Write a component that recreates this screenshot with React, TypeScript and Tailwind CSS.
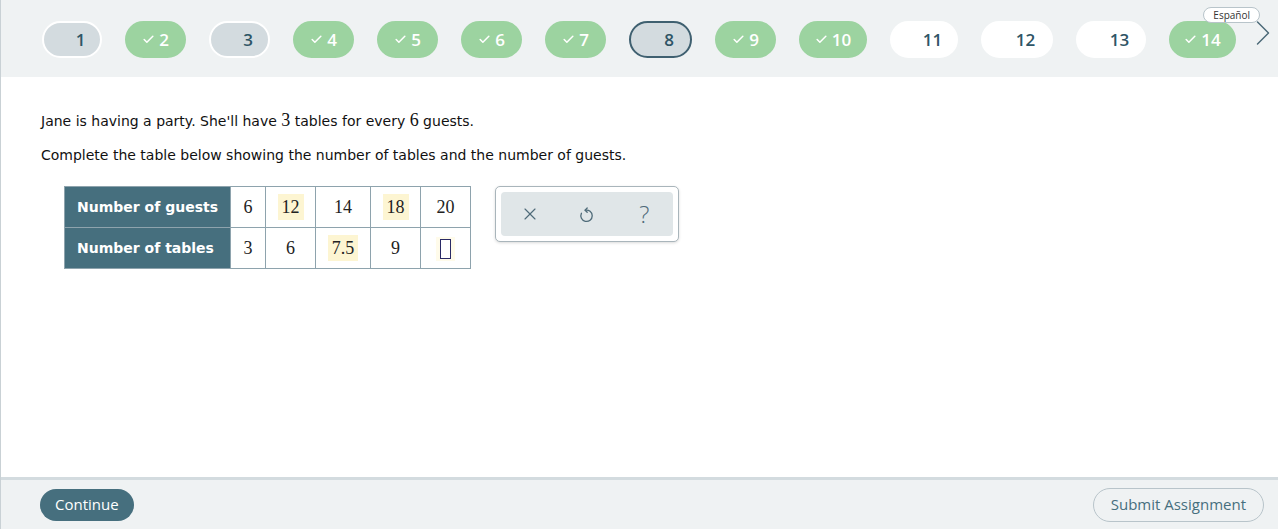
import { Check, ChevronRight, X } from 'lucide-react';

type PillState = 'todo' | 'done' | 'current' | 'open';

const pills: { n: number; state: PillState; w: string }[] = [
  { n: 1, state: 'todo', w: 'w-[60px]' },
  { n: 2, state: 'done', w: 'w-[61px]' },
  { n: 3, state: 'todo', w: 'w-[61px]' },
  { n: 4, state: 'done', w: 'w-[61px]' },
  { n: 5, state: 'done', w: 'w-[61px]' },
  { n: 6, state: 'done', w: 'w-[61px]' },
  { n: 7, state: 'done', w: 'w-[61px]' },
  { n: 8, state: 'current', w: 'w-[63px]' },
  { n: 9, state: 'done', w: 'w-[61px]' },
  { n: 10, state: 'done', w: 'w-[68px]' },
  { n: 11, state: 'open', w: 'w-[68px]' },
  { n: 12, state: 'open', w: 'w-[72px]' },
  { n: 13, state: 'open', w: 'w-[70px]' },
  { n: 14, state: 'done', w: 'w-[67px]' },
];

const pillStyles: Record<PillState, string> = {
  todo: 'bg-[#d3dbdf] text-[#2f5566] border-2 border-white',
  done: 'bg-[#9cd3a0] text-white border-2 border-[#9cd3a0]',
  current: 'bg-[#d3dbdf] text-[#2f5566] border-2 border-[#3f6070]',
  open: 'bg-white text-[#2f5566] border-2 border-white',
};

function Pill({ n, state, w }: { n: number; state: PillState; w: string }) {
  return (
    <div
      className={`h-[37px] rounded-full flex items-center justify-center shrink-0 ${pillStyles[state]} ${w}`}
    >
      <span className="w-[17px] flex items-center justify-start">
        {state === 'done' && <Check size={13} strokeWidth={2.8} />}
      </span>
      <span className="text-[17px] font-semibold leading-none">{n}</span>
    </div>
  );
}

function UndoIcon() {
  return (
    <svg width="21" height="21" viewBox="0 0 24 24" fill="none" stroke="currentColor" strokeWidth="1.5" strokeLinecap="round" strokeLinejoin="round">
      <path d="M10.6 7.1 A6.5 6.5 0 1 1 6.2 10.6" />
      <path d="M12.8 4.6 L10.4 7.1 L12.8 9.5" />
    </svg>
  );
}

const guests = [
  { v: '6', hl: false, w: 'w-[35px]' },
  { v: '12', hl: true, w: 'w-[50px]' },
  { v: '14', hl: false, w: 'w-[55px]' },
  { v: '18', hl: true, w: 'w-[50px]' },
  { v: '20', hl: false, w: 'w-[50px]' },
];
const tables = [
  { v: '3', hl: false },
  { v: '6', hl: false },
  { v: '7.5', hl: true },
  { v: '9', hl: false },
  { v: '', hl: false },
];

export default function App() {
  return (
    <div className="h-[529px] w-full flex flex-col border-l border-[#c9d1d5] font-['Open_Sans',sans-serif] overflow-hidden">
      {/* Question navigator */}
      <div className="relative h-[77px] bg-[#eff2f3] flex items-center pl-[41px] pr-[44px] shrink-0">
        <div className="flex items-center gap-[23px] pt-[2px]">
          {pills.map((p) => (
            <Pill key={p.n} {...p} />
          ))}
        </div>
        <span className="absolute right-[18px] top-[7px] h-[16px] px-[9px] rounded-full bg-white border border-[#b8c4ca] text-[10px] leading-[14px] text-[#333]">
          Español
        </span>
        <ChevronRight
          className="absolute right-[-7px] top-[11px] text-[#4b6a78]"
          size={44}
          strokeWidth={0.8}
        />
      </div>

      {/* Question body */}
      <div className="flex-1 bg-white pt-[33px] pl-[40px] text-[14px] text-[#111] font-['DejaVu_Sans',sans-serif]">
        <p className="leading-[20px]">
          Jane is having a party. She'll have{' '}
          <span className="font-['Liberation_Serif',serif] text-[18px]">3</span> tables for every{' '}
          <span className="font-['Liberation_Serif',serif] text-[18px]">6</span> guests.
        </p>
        <p className="mt-[14px] leading-[20px]">
          Complete the table below showing the number of tables and the number of guests.
        </p>

        <div className="mt-[21px] ml-[23px] flex items-start gap-[24px]">
          <table className="border-collapse">
            <tbody>
              <tr>
                <th className="h-[41px] w-[166px] bg-[#466f7e] text-white font-bold text-[14px] text-left pl-[12px] border border-[#8ea3ad]">
                  Number of guests
                </th>
                {guests.map((c, i) => (
                  <td
                    key={i}
                    className={`h-[41px] ${c.w} border border-[#8ea3ad] text-center font-['Liberation_Serif',serif] text-[18px] text-[#222]`}
                  >
                    <span className={c.hl ? 'bg-[#fdf5d2] px-[4px] py-[3px]' : ''}>{c.v}</span>
                  </td>
                ))}
              </tr>
              <tr>
                <th className="h-[41px] bg-[#466f7e] text-white font-bold text-[14px] text-left pl-[12px] border border-[#8ea3ad]">
                  Number of tables
                </th>
                {tables.map((c, i) => (
                  <td
                    key={i}
                    className="h-[41px] border border-[#8ea3ad] text-center font-['Liberation_Serif',serif] text-[18px] text-[#222]"
                  >
                    {c.v ? (
                      <span className={c.hl ? 'bg-[#fdf5d2] px-[4px] py-[3px]' : ''}>{c.v}</span>
                    ) : (
                      <span className="inline-flex bg-[#fffbea] px-[4px] py-[2px] align-middle">
                        <span className="block w-[11px] h-[20px] border border-[#2a2a66] bg-white" />
                      </span>
                    )}
                  </td>
                ))}
              </tr>
            </tbody>
          </table>

          <div className="w-[184px] h-[56px] rounded-[5px] border border-[#a9b5bb] bg-white p-[5px] shadow-[0_1px_3px_rgba(0,0,0,0.15)]">
            <div className="h-full rounded-[4px] bg-[#e0e6e8] grid grid-cols-3 items-center text-[#4f6b79]">
              <span className="flex justify-center">
                <X size={20} strokeWidth={1.4} />
              </span>
              <span className="flex justify-center">
                <UndoIcon />
              </span>
              <span className="flex justify-center text-[24px] font-light leading-none font-['Open_Sans',sans-serif]">?</span>
            </div>
          </div>
        </div>
      </div>

      {/* Footer */}
      <div className="h-[52px] shrink-0 border-t-[3px] border-[#d3dbdf] bg-[#eff2f3] flex items-center justify-between pl-[39px] pr-[14px]">
        <button className="h-[32px] px-[15px] rounded-full bg-[#466f7e] text-white text-[15px] font-medium">
          Continue
        </button>
        <button className="h-[34px] px-[17px] rounded-full border border-[#b8c4ca] bg-[#eff2f3] text-[#466f7e] text-[15px] font-medium">
          Submit Assignment
        </button>
      </div>
    </div>
  );
}
